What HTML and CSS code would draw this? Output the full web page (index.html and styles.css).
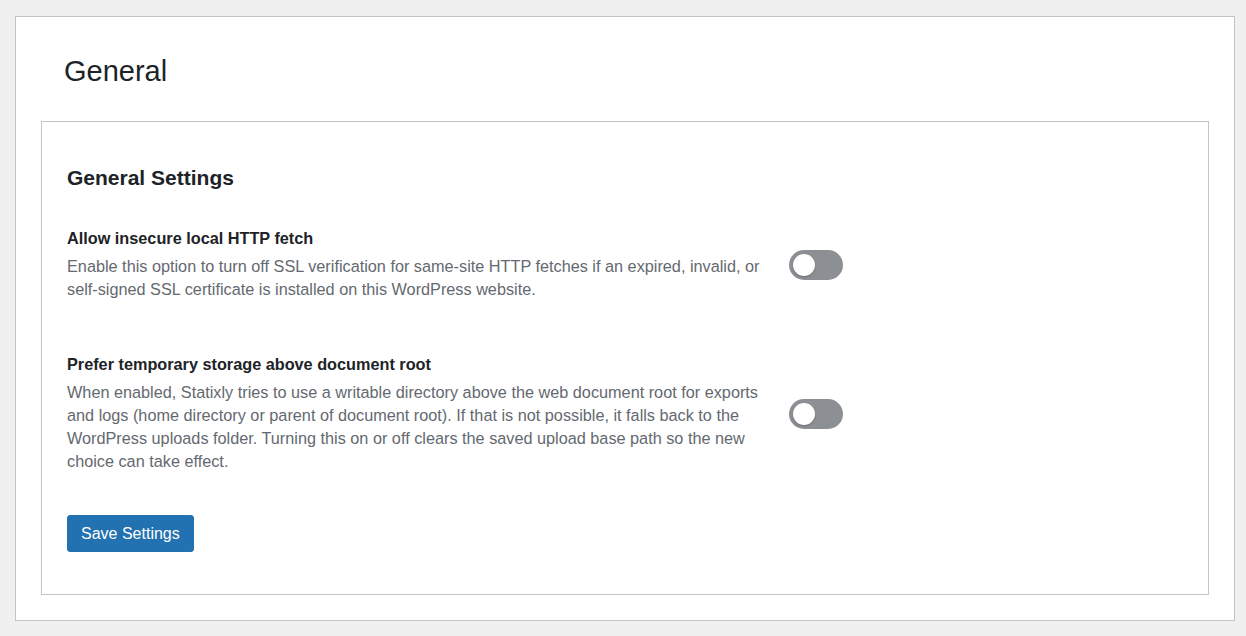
FILE: index.html
```html
<!DOCTYPE html>
<html lang="en">
<head>
    <meta charset="UTF-8">
    <meta name="viewport" content="width=device-width, initial-scale=1.0">
    <title>General</title>
    <link rel="stylesheet" href="styles.css">
</head>
<body>
    <div class="wrap">
        <h1>General</h1>

        <form class="settings-box">
            <h2>General Settings</h2>

            <div class="setting-row">
                <div class="setting-text">
                    <div class="setting-label">Allow insecure local HTTP fetch</div>
                    <p class="setting-desc">Enable this option to turn off SSL verification for same-site HTTP fetches if an expired, invalid, or self-signed SSL certificate is installed on this WordPress website.</p>
                </div>
                <label class="switch">
                    <input type="checkbox" name="allow_insecure_fetch">
                    <span class="slider"></span>
                </label>
            </div>

            <div class="setting-row">
                <div class="setting-text">
                    <div class="setting-label">Prefer temporary storage above document root</div>
                    <p class="setting-desc">When enabled, Statixly tries to use a writable directory above the web document root for exports and logs (home directory or parent of document root). If that is not possible, it falls back to the WordPress uploads folder. Turning this on or off clears the saved upload base path so the new choice can take effect.</p>
                </div>
                <label class="switch">
                    <input type="checkbox" name="prefer_above_root">
                    <span class="slider"></span>
                </label>
            </div>

            <button type="submit" class="save-btn">Save Settings</button>
        </form>
    </div>
</body>
</html>
```

FILE: styles.css
```css
:root {
    --page-bg: #f0f0f1;
    --border-color: #c3c4c7;
    --heading-color: #1d2327;
    --text-muted: #646970;
    --toggle-off: #8c8f94;
    --primary: #2271b1;
    --primary-hover: #135e96;
}

body, html {
    font-family: 'Liberation Sans', Arial, sans-serif;
    background-color: var(--page-bg);
    margin: 0;
    padding: 0;
}

.wrap {
    margin: 16px 11px 16px 15px;
    padding: 38px 25px 25px;
    background-color: #fff;
    border: 1px solid var(--border-color);
}

h1 {
    margin: 0 0 34px 23px;
    font-size: 29px;
    font-weight: 400;
    line-height: 32px;
    color: var(--heading-color);
}

.settings-box {
    border: 1px solid var(--border-color);
    padding: 44px 25px 42px;
}

h2 {
    margin: 0 0 38px;
    font-size: 21px;
    font-weight: 700;
    line-height: 24px;
    color: var(--heading-color);
}

.setting-row {
    display: flex;
    align-items: center;
    margin-bottom: 53px;
}

.setting-row + .setting-row {
    margin-bottom: 42px;
}

.setting-text {
    width: 700px;
}

.setting-label {
    font-size: 16.25px;
    font-weight: 700;
    line-height: 20px;
    color: var(--heading-color);
}

.setting-desc {
    margin: 7px 0 0;
    font-size: 16.25px;
    line-height: 23px;
    color: var(--text-muted);
}

.switch {
    position: relative;
    display: inline-block;
    width: 54px;
    height: 30px;
    margin-left: 22px;
    flex-shrink: 0;
    cursor: pointer;
}

.switch input {
    opacity: 0;
    width: 0;
    height: 0;
}

.slider {
    position: absolute;
    inset: 0;
    background-color: var(--toggle-off);
    border-radius: 15px;
    transition: background-color 0.2s;
}

.slider::before {
    content: "";
    position: absolute;
    left: 4px;
    top: 4px;
    width: 22px;
    height: 22px;
    border-radius: 50%;
    background-color: #fff;
    box-shadow: 0 1px 2px rgba(0, 0, 0, 0.25);
    transition: transform 0.2s;
}

.switch input:checked + .slider {
    background-color: var(--primary);
}

.switch input:checked + .slider::before {
    transform: translateX(24px);
}

.save-btn {
    display: inline-block;
    background-color: var(--primary);
    color: #fff;
    border: 1px solid var(--primary);
    border-radius: 3px;
    padding: 0 13px;
    height: 37px;
    font-family: inherit;
    font-size: 16px;
    line-height: 35px;
    cursor: pointer;
}

.save-btn:hover {
    background-color: var(--primary-hover);
}
```
